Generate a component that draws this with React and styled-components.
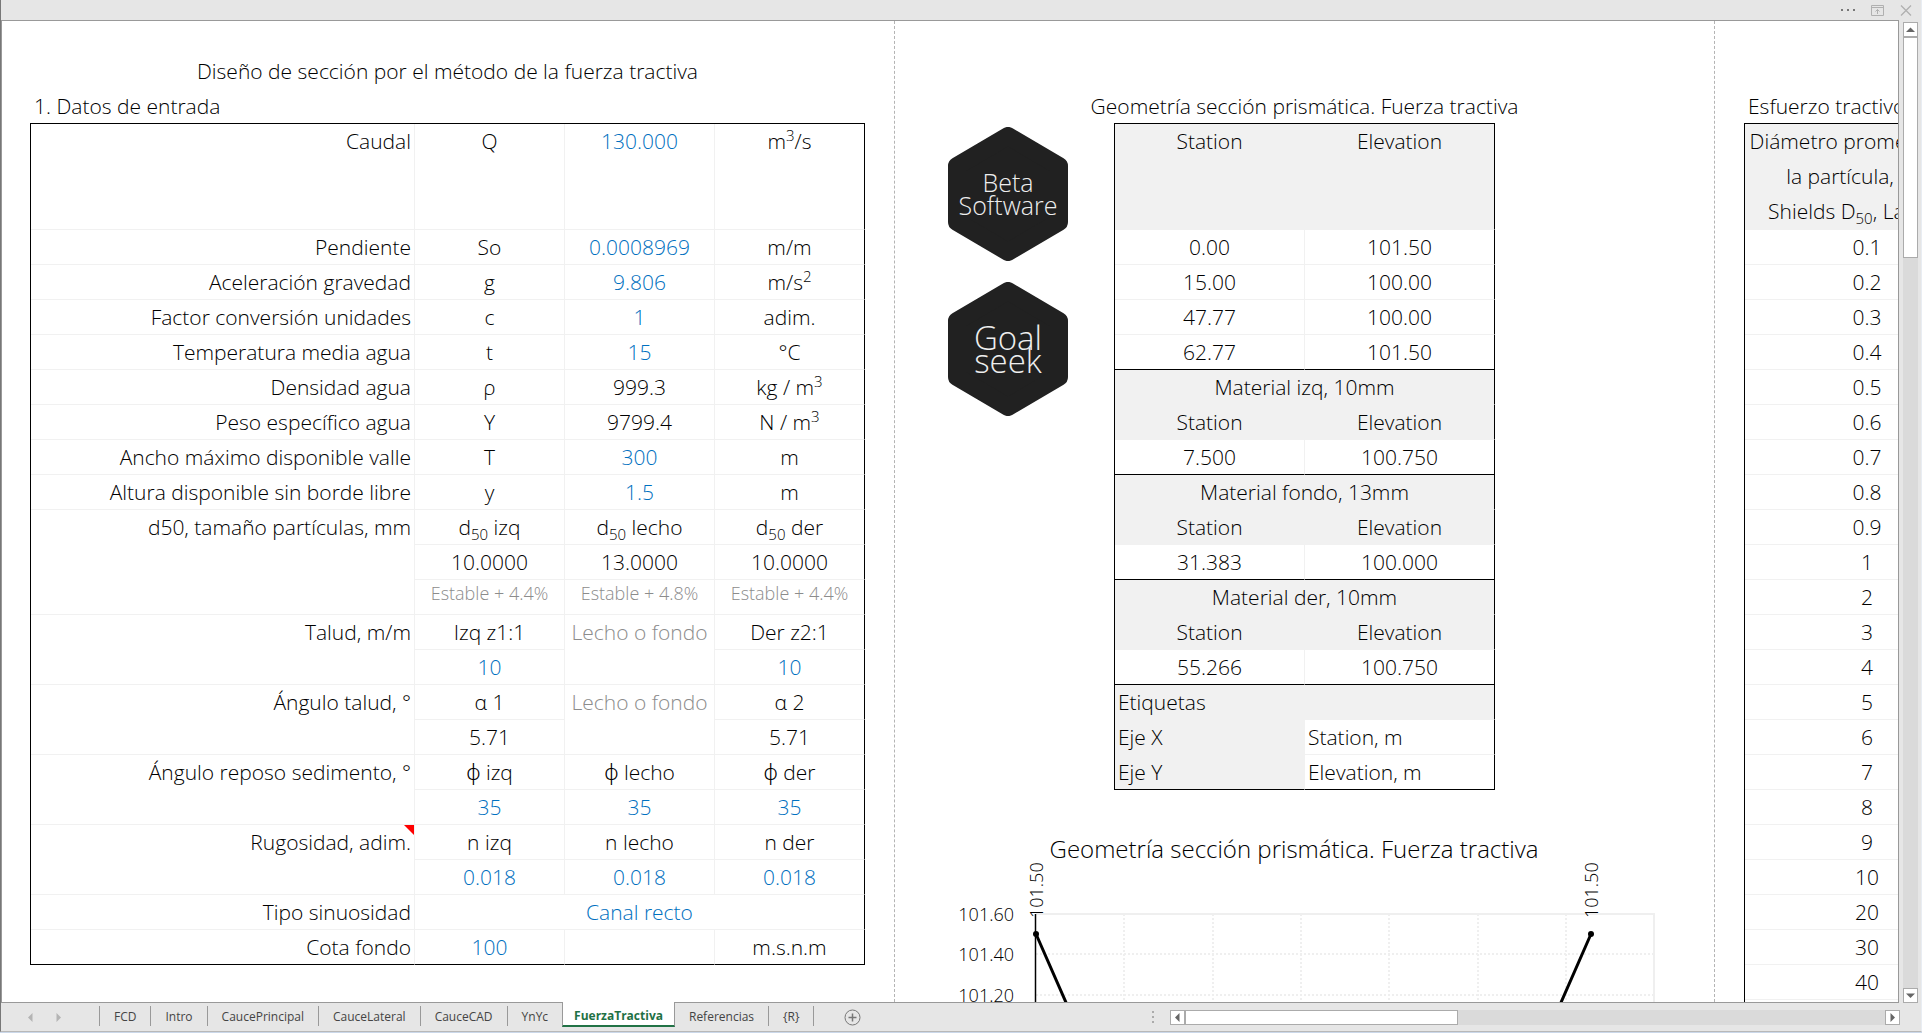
import React from "react";
import styled, { createGlobalStyle, css } from "styled-components";

const GlobalStyle = createGlobalStyle`
  *, *::before, *::after { box-sizing: border-box; }
  html, body, #root { height: 100%; }
  body {
    margin: 0;
    overflow: hidden;
    background: #cbd8ea;
    color: #000;
    font-family: "Open Sans", "Noto Sans", sans-serif;
    font-weight: 300;
  }
  button { font: inherit; color: inherit; border: 0; padding: 0; background: none; }
`;

const LINE = "#f1f1f1";
const FRAME = "#999";
const ROW = 35;

const Window = styled.div`
  height: calc(100% - 1px);
  display: grid;
  grid-template-rows: 20px minmax(0, 1fr) 28px;
  background: #e6e6e6;
  border-left: 1px solid #777;
  border-right: 1px solid #e9edf3;
  border-bottom: 1px solid #b8b8b8;
`;

const TopBar = styled.header`
  display: flex;
  justify-content: flex-end;
  align-items: center;
  gap: 15px;
  padding-right: 9px;
`;

const IconButton = styled.button`
  display: flex;
  svg { display: block; }
`;

const Workspace = styled.div`
  display: grid;
  grid-template-columns: minmax(0, 1fr) 22px;
  min-height: 0;
`;

const Sheet = styled.main`
  display: flex;
  overflow: hidden;
  min-width: 0;
  background: #fff;
  border: 1px solid ${FRAME};
`;

const Page = styled.section`
  flex: 0 0 ${(p) => p.$width}px;
  padding: 32px 0 0 ${(p) => p.$inset}px;
  border-right: 1px dashed #b4b4b4;
`;

const titleText = css`
  height: ${ROW}px;
  margin: 0;
  font-size: 21px;
  line-height: 36px;
  font-weight: 300;
  white-space: nowrap;
`;

const Title = styled.h1`
  ${titleText}
  width: 835px;
  text-align: center;
`;

const BlankRow = styled.div`
  height: ${ROW}px;
`;

const Heading = styled.h2`
  ${titleText}
  display: flex;
  justify-content: ${(p) => (p.$center ? "center" : "flex-start")};
  padding: 0 4px;
`;

const Table = styled.table`
  width: ${(p) => p.$width}px;
  font-size: 21px;
  line-height: 34px;
  table-layout: fixed;
  border-collapse: separate;
  border-spacing: 0;
  border-top: 1px solid #000;
  border-left: 1px solid #000;
`;

const Col = styled.col`
  width: ${(p) => p.$width}px;
`;

const Row = styled.tr`
  height: ${(p) => (p.$tall ? 106 : ROW)}px;
  && > :last-child { border-right-color: ${(p) => (p.$open ? LINE : "#000")}; }
  && > * { border-bottom-color: ${(p) => (p.$rule ? "#000" : LINE)}; }
`;

const tones = { input: "#0070c0", muted: "#8c8c8c", normal: "#000" };

const cell = css`
  position: relative;
  padding: 0 3px;
  vertical-align: top;
  font-weight: 300;
  white-space: nowrap;
  text-align: ${(p) => p.$align || "center"};
  color: ${(p) => tones[p.$tone || "normal"]};
  background: ${(p) => (p.$fill ? LINE : "transparent")};
  border-right: 1px solid ${LINE};
  border-bottom: 1px solid ${LINE};
  sub, sup { font-size: 15px; line-height: 0; }
`;

const Cell = styled.td`
  ${cell}
  ${(p) => p.$small && css`font-size: 18px; line-height: 26px;`}
`;
const Head = styled.th`
  ${cell}
  ${(p) => p.$multiline && css`line-height: ${ROW}px;`}
`;

const NoteMark = styled.span`
  position: absolute;
  top: 0;
  right: 0;
  border-top: 10px solid #f00;
  border-left: 10px solid transparent;
`;

const Geometry = styled.div`
  display: flex;
  gap: 46px;
  padding: 35px 0 0 0;
`;

const GeometryColumn = styled.div`
  flex: 0 0 381px;
  width: 381px;
`;

const Badges = styled.div`
  display: flex;
  flex-direction: column;
  gap: 21px;
  padding-top: 39px;
`;

const Badge = styled.button`
  display: block;
  height: 134px;
  svg { display: block; }
`;

const Chart = styled.svg`
  display: block;
  margin: 30px 0 0 -13px;
  font-weight: 300;
`;

const Scroll = styled.div`
  display: flex;
  flex-direction: ${(p) => (p.$vertical ? "column" : "row")};
  background: #dadada;
`;

const VerticalScroll = styled(Scroll)`
  margin: 2px 3px 0 4px;
`;

const HorizontalScroll = styled(Scroll)`
  flex: 0 0 38%;
  height: 15px;
  margin-right: 21px;
`;

const Arrow = styled.button`
  flex: 0 0 15px;
  display: grid;
  place-items: center;
  width: 15px;
  height: 15px;
  background: #fff;
  border: 1px solid #ababab;
`;

const Thumb = styled.div`
  flex: 0 0 ${(p) => p.$size}px;
  background: #fff;
  border: 1px solid #ababab;
`;

const Spacer = styled.div`
  flex: 1;
`;

const TabBar = styled.nav`
  display: flex;
  align-items: center;
  min-width: 0;
`;

const Pager = styled.div`
  display: flex;
  gap: 19px;
  width: 98px;
  padding-left: 25px;
`;

const Tab = styled.button`
  align-self: flex-start;
  height: 20px;
  margin-top: 3px;
  padding: 2px 14px 0;
  font-size: 12px;
  line-height: 18px;
  font-weight: 400;
  color: #444;
  border-right: 1px solid #999;
  ${(p) => p.$first && css`border-left: 1px solid #999;`}
  ${(p) => p.$beforeActive && css`border-right: 0;`}
  ${(p) =>
    p.$active &&
    css`
      position: relative;
      height: 25px;
      margin-top: -1px;
      padding: 5px 11px 0;
      font-weight: 700;
      color: #1f7145;
      background: #fff;
      border-left: 1px solid #999;
      border-bottom: 2px solid #217346;
    `}
`;

const AddSheet = styled.button`
  display: flex;
  margin-left: 30px;
`;

const Grip = styled.div`
  display: grid;
  gap: 3px;
  margin: 0 16px 0 auto;
`;

const GripDot = styled.span`
  width: 2px;
  height: 2px;
  background: #ababab;
`;

const d50 = (side) => (
  <>
    d<sub>50</sub> {side}
  </>
);

const inputs = [
  ["Pendiente", "So", "0.0008969", "m/m", true],
  ["Aceleración gravedad", "g", "9.806", <>m/s<sup>2</sup></>, true],
  ["Factor conversión unidades", "c", "1", "adim.", true],
  ["Temperatura media agua", "t", "15", "°C", true],
  ["Densidad agua", "ρ", "999.3", <>kg / m<sup>3</sup></>, false],
  ["Peso específico agua", "Υ", "9799.4", <>N / m<sup>3</sup></>, false],
  ["Ancho máximo disponible valle", "T", "300", "m", true],
  ["Altura disponible sin borde libre", "y", "1.5", "m", true],
];

const InputTable = () => (
  <Table $width={835}>
    <colgroup>
      <Col $width={384} />
      <Col $width={150} />
      <Col $width={150} />
      <Col $width={150} />
    </colgroup>
    <tbody>
      <Row $tall>
        <Head scope="row" $align="right">Caudal</Head>
        <Cell>Q</Cell>
        <Cell $tone="input">130.000</Cell>
        <Cell>m<sup>3</sup>/s</Cell>
      </Row>
      {inputs.map(([label, symbol, value, unit, editable]) => (
        <Row key={label}>
          <Head scope="row" $align="right">{label}</Head>
          <Cell>{symbol}</Cell>
          <Cell $tone={editable ? "input" : "normal"}>{value}</Cell>
          <Cell>{unit}</Cell>
        </Row>
      ))}
      <Row>
        <Head scope="rowgroup" rowSpan={3} $align="right">d50, tamaño partículas, mm</Head>
        <Cell>{d50("izq")}</Cell>
        <Cell>{d50("lecho")}</Cell>
        <Cell>{d50("der")}</Cell>
      </Row>
      <Row>
        <Cell>10.0000</Cell>
        <Cell>13.0000</Cell>
        <Cell>10.0000</Cell>
      </Row>
      <Row>
        <Cell $small $tone="muted">Estable + 4.4%</Cell>
        <Cell $small $tone="muted">Estable + 4.8%</Cell>
        <Cell $small $tone="muted">Estable + 4.4%</Cell>
      </Row>
      <Row>
        <Head scope="rowgroup" rowSpan={2} $align="right">Talud, m/m</Head>
        <Cell>Izq z1:1</Cell>
        <Cell rowSpan={2} $tone="muted">Lecho o fondo</Cell>
        <Cell>Der z2:1</Cell>
      </Row>
      <Row>
        <Cell $tone="input">10</Cell>
        <Cell $tone="input">10</Cell>
      </Row>
      <Row>
        <Head scope="rowgroup" rowSpan={2} $align="right">Ángulo talud, °</Head>
        <Cell>α 1</Cell>
        <Cell rowSpan={2} $tone="muted">Lecho o fondo</Cell>
        <Cell>α 2</Cell>
      </Row>
      <Row>
        <Cell>5.71</Cell>
        <Cell>5.71</Cell>
      </Row>
      <Row>
        <Head scope="rowgroup" rowSpan={2} $align="right">Ángulo reposo sedimento, °</Head>
        <Cell>ϕ izq</Cell>
        <Cell>ϕ lecho</Cell>
        <Cell>ϕ der</Cell>
      </Row>
      <Row>
        <Cell $tone="input">35</Cell>
        <Cell $tone="input">35</Cell>
        <Cell $tone="input">35</Cell>
      </Row>
      <Row>
        <Head scope="rowgroup" rowSpan={2} $align="right">
          Rugosidad, adim.
          <NoteMark />
        </Head>
        <Cell>n izq</Cell>
        <Cell>n lecho</Cell>
        <Cell>n der</Cell>
      </Row>
      <Row>
        <Cell $tone="input">0.018</Cell>
        <Cell $tone="input">0.018</Cell>
        <Cell $tone="input">0.018</Cell>
      </Row>
      <Row>
        <Head scope="row" $align="right">Tipo sinuosidad</Head>
        <Cell colSpan={3} $tone="input">Canal recto</Cell>
      </Row>
      <Row $rule>
        <Head scope="row" $align="right">Cota fondo</Head>
        <Cell $tone="input">100</Cell>
        <Cell />
        <Cell>m.s.n.m</Cell>
      </Row>
    </tbody>
  </Table>
);

const stations = [
  ["0.00", "101.50"],
  ["15.00", "100.00"],
  ["47.77", "100.00"],
  ["62.77", "101.50"],
];

const materials = [
  ["Material izq, 10mm", "7.500", "100.750"],
  ["Material fondo, 13mm", "31.383", "100.000"],
  ["Material der, 10mm", "55.266", "100.750"],
];

const GeometryTable = () => (
  <Table $width={381}>
    <colgroup>
      <Col $width={190} />
      <Col $width={190} />
    </colgroup>
    <tbody>
      <Row $tall>
        <Head scope="col" $fill>Station</Head>
        <Head scope="col" $fill>Elevation</Head>
      </Row>
      {stations.map(([station, elevation], i) => (
        <Row key={station} $rule={i === stations.length - 1}>
          <Cell>{station}</Cell>
          <Cell>{elevation}</Cell>
        </Row>
      ))}
      {materials.map(([name, station, elevation]) => (
        <React.Fragment key={name}>
          <Row>
            <Head colSpan={2} $fill>{name}</Head>
          </Row>
          <Row>
            <Head scope="col" $fill>Station</Head>
            <Head scope="col" $fill>Elevation</Head>
          </Row>
          <Row $rule>
            <Cell>{station}</Cell>
            <Cell>{elevation}</Cell>
          </Row>
        </React.Fragment>
      ))}
      <Row>
        <Head colSpan={2} $fill $align="left">Etiquetas</Head>
      </Row>
      <Row>
        <Head scope="row" $fill $align="left">Eje X</Head>
        <Cell $align="left">Station, m</Cell>
      </Row>
      <Row $rule>
        <Head scope="row" $fill $align="left">Eje Y</Head>
        <Cell $align="left">Elevation, m</Cell>
      </Row>
    </tbody>
  </Table>
);

const diameters = [
  "0.1", "0.2", "0.3", "0.4", "0.5", "0.6", "0.7", "0.8", "0.9", "1", "2",
  "3", "4", "5", "6", "7", "8", "9", "10", "20", "30", "40", "",
];

const StressTable = () => (
  <Table $width={246}>
    <tbody>
      <Row $tall $open>
        <Head scope="col" $fill $multiline>
          Diámetro promedio para
          <br />
          la partícula, (mm)
          <br />
          Shields D<sub>50</sub>, Lane D<sub>75</sub>
        </Head>
      </Row>
      {diameters.map((d) => (
        <Row key={d} $open>
          <Cell>{d}</Cell>
        </Row>
      ))}
    </tbody>
  </Table>
);

const HexBadge = ({ lines, size, baselines }) => (
  <Badge type="button">
    <svg width="120" height="134" viewBox="0 0 120 134">
      <polygon
        points="60,9 111,39 111,95 60,125 9,95 9,39"
        fill="#212121"
        stroke="#212121"
        strokeWidth="18"
        strokeLinejoin="round"
      />
      {lines.map((line, i) => (
        <text key={line} x="60" y={baselines[i]} fontSize={size} fill="#eee" textAnchor="middle" fontWeight="300">
          {line}
        </text>
      ))}
    </svg>
  </Badge>
);

const SectionChart = () => (
  <Chart width="740" height="200" viewBox="0 0 740 200">
    <text x="359" y="38" fontSize="24" textAnchor="middle">
      Geometría sección prismática. Fuerza tractiva
    </text>
    <g stroke="#efefef" strokeWidth="2" fill="none">
      <path d="M101 94H719V200" />
      <path strokeDasharray="2 2" d="M189 94V200M278 94V200M366 94V200M454 94V200M543 94V200M631 94V200" />
      <path strokeDasharray="2 2" d="M101 134H719M101 175H719" />
    </g>
    <g fontSize="18" fill="#000" textAnchor="end">
      <text x="79" y="101">101.60</text>
      <text x="79" y="141">101.40</text>
      <text x="79" y="182">101.20</text>
    </g>
    <g fontSize="18" fill="#000">
      <text transform="translate(108 98) rotate(-90)">101.50</text>
      <text transform="translate(663 98) rotate(-90)">101.50</text>
    </g>
    <path d="M100.500 94V200" stroke="#000" strokeWidth="1.500" />
    <path d="M101 114L140 203M656 114L617 203" stroke="#000" strokeWidth="3" />
    <circle cx="101" cy="114" r="3" />
    <circle cx="656" cy="114" r="3" />
  </Chart>
);

const Triangle = ({ dir, color = "#666" }) => {
  const shapes = {
    up: "M0 7L4.500 2.500L9 7Z",
    down: "M0 2.500L4.500 7L9 2.500Z",
    left: "M6.500 0V9L2 4.500Z",
    right: "M2.500 0V9L7 4.500Z",
  };
  return (
    <svg width="9" height="9" viewBox="0 0 9 9" aria-hidden="true">
      <path d={shapes[dir]} fill={color} />
    </svg>
  );
};

const tabs = [
  "FCD", "Intro", "CaucePrincipal", "CauceLateral", "CauceCAD", "YnYc",
  "FuerzaTractiva", "Referencias", "{R}",
];
const activeTab = 6;

export default function App() {
  return (
    <Window>
      <GlobalStyle />
      <TopBar>
        <IconButton type="button" aria-label="Más opciones">
          <svg width="15" height="3" viewBox="0 0 15 3">
            <path d="M0 0h2v2H0zM6 0h2v2H6zM12 0h2v2h-2z" fill="#777" />
          </svg>
        </IconButton>
        <IconButton type="button" aria-label="Mostrar cinta">
          <svg width="14" height="11" viewBox="0 0 14 11" fill="none" stroke="#b0b0b0">
            <path d="M.5 .5h12v10H.5zM.5 2.500h12M6.500 9V4.500M4.500 6.500l2-2 2 2" />
          </svg>
        </IconButton>
        <IconButton type="button" aria-label="Cerrar">
          <svg width="12" height="11" viewBox="0 0 12 11" fill="none" stroke="#b0b0b0" strokeWidth="1.300">
            <path d="M1 .5l10 10M11 .5l-10 10" />
          </svg>
        </IconButton>
      </TopBar>
      <Workspace>
        <Sheet>
          <Page $width={893} $inset={28}>
            <Title>Diseño de sección por el método de la fuerza tractiva</Title>
            <Heading>1. Datos de entrada</Heading>
            <InputTable />
          </Page>
          <Page $width={820} $inset={53}>
            <Geometry>
              <Badges>
                <HexBadge lines={["Beta", "Software"]} size={25} baselines={[65, 88]} />
                <HexBadge lines={["Goal", "seek"]} size={33} baselines={[68, 91]} />
              </Badges>
              <GeometryColumn>
                <Heading $center>Geometría sección prismática. Fuerza tractiva</Heading>
                <GeometryTable />
              </GeometryColumn>
            </Geometry>
            <SectionChart />
          </Page>
          <Page $width={320} $inset={29}>
            <BlankRow />
            <Heading>Esfuerzo tractivo</Heading>
            <StressTable />
          </Page>
        </Sheet>
        <VerticalScroll $vertical>
          <Arrow type="button" aria-label="Subir"><Triangle dir="up" /></Arrow>
          <Thumb $size={221} />
          <Spacer />
          <Arrow type="button" aria-label="Bajar"><Triangle dir="down" /></Arrow>
        </VerticalScroll>
      </Workspace>
      <TabBar>
        <Pager>
          <IconButton type="button" aria-label="Hoja anterior"><Triangle dir="left" color="#b4b4b4" /></IconButton>
          <IconButton type="button" aria-label="Hoja siguiente"><Triangle dir="right" color="#b4b4b4" /></IconButton>
        </Pager>
        {tabs.map((name, i) => (
          <Tab
            key={name}
            type="button"
            $first={i === 0}
            $active={i === activeTab}
            $beforeActive={i === activeTab - 1}
          >
            {name}
          </Tab>
        ))}
        <AddSheet type="button" aria-label="Hoja nueva">
          <svg width="17" height="17" viewBox="0 0 17 17" fill="none" stroke="#777">
            <circle cx="8.500" cy="8.500" r="7.500" />
            <path d="M8.500 4.500v8M4.500 8.500h8" strokeWidth="1.500" />
          </svg>
        </AddSheet>
        <Grip>
          <GripDot />
          <GripDot />
          <GripDot />
        </Grip>
        <HorizontalScroll>
          <Arrow type="button" aria-label="Izquierda"><Triangle dir="left" /></Arrow>
          <Thumb $size={273} />
          <Spacer />
          <Arrow type="button" aria-label="Derecha"><Triangle dir="right" /></Arrow>
        </HorizontalScroll>
      </TabBar>
    </Window>
  );
}
